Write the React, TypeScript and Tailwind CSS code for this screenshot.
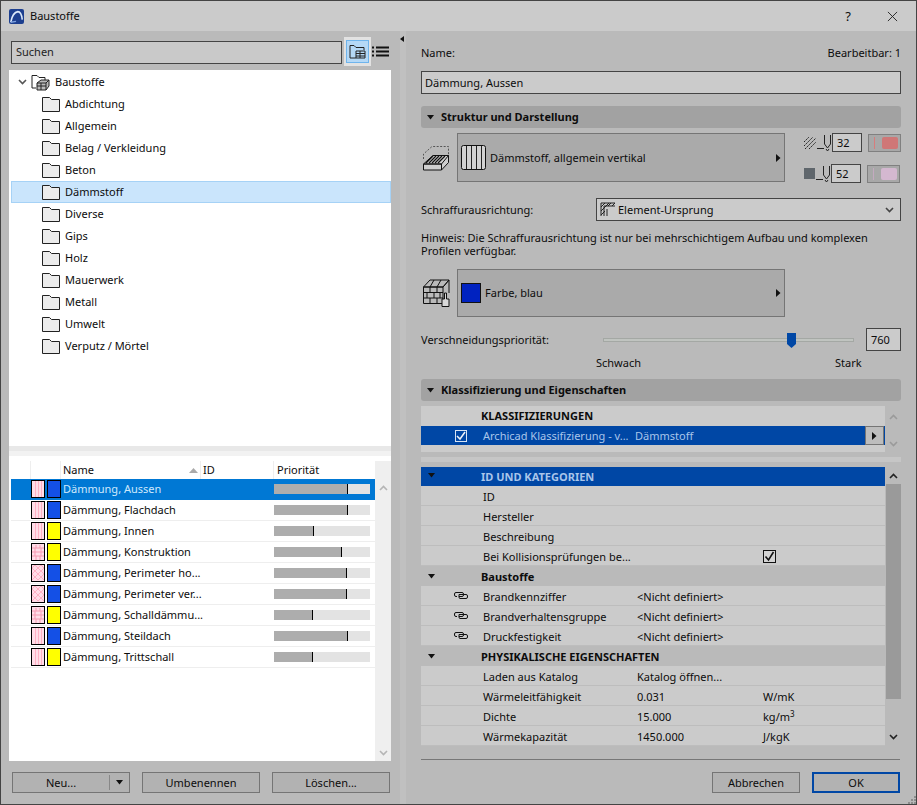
import type { ReactNode } from "react"

const folders = ["Abdichtung", "Allgemein", "Belag / Verkleidung", "Beton", "Dämmstoff", "Diverse", "Gips", "Holz", "Mauerwerk", "Metall", "Umwelt", "Verputz / Mörtel"]

const materials = [
  { name: "Dämmung, Aussen", hatch: "v", color: "#1450e6", pos: 73 },
  { name: "Dämmung, Flachdach", hatch: "v", color: "#1450e6", pos: 73 },
  { name: "Dämmung, Innen", hatch: "v", color: "#ffff00", pos: 39 },
  { name: "Dämmung, Konstruktion", hatch: "b", color: "#ffff00", pos: 67 },
  { name: "Dämmung, Perimeter ho...", hatch: "x", color: "#1450e6", pos: 72 },
  { name: "Dämmung, Perimeter ver...", hatch: "x", color: "#1450e6", pos: 72 },
  { name: "Dämmung, Schalldämmu...", hatch: "b", color: "#ffff00", pos: 38 },
  { name: "Dämmung, Steildach", hatch: "v", color: "#1450e6", pos: 73 },
  { name: "Dämmung, Trittschall", hatch: "v", color: "#ffff00", pos: 38 },
]

function Folder() {
  return (
    <svg width="18" height="15" viewBox="0 0 18 15" className="shrink-0">
      <path d="M.5 14.500V.5h7l2 2h8v12z" fill="#ececec" stroke="#222" strokeLinejoin="round" />
    </svg>
  )
}

function Triangle({ className = "" }: { className?: string }) {
  return (
    <svg width="7" height="5" viewBox="0 0 7 5" className={className}>
      <path d="M0 0h7L3.500 4.500z" fill="#111" />
    </svg>
  )
}

function ArrowRight() {
  return (
    <svg width="5" height="8" viewBox="0 0 5 8">
      <path d="M0 0l4.500 4L0 8z" fill="#111" />
    </svg>
  )
}

function Chevron({ up = false, color = "#222" }: { up?: boolean; color?: string }) {
  return (
    <svg width="9" height="6" viewBox="0 0 9 6">
      <path d={up ? "M1 5l3.500-3.500L8 5" : "M1 1l3.500 3.500L8 1"} fill="none" stroke={color} strokeWidth="1.600" />
    </svg>
  )
}

function HatchSwatch({ kind }: { kind: string }) {
  return (
    <svg width="14" height="18" viewBox="0 0 14 18" className="shrink-0">
      <rect x="0.500" y="0.500" width="13" height="17" fill="#ffdde8" stroke="#000" />
      {kind === "v" && <path d="M4.500 1v16M7.500 1v16M10.500 1v16" stroke="#ffb0c4" />}
      {kind === "b" && <path d="M1 5h12M1 9h12M1 13h12M5 2v3M9 2v3M4 5v4M10 5v4M4 9v4M10 9v4M5 13v4M9 13v4" stroke="#f79ab2" fill="none" />}
      {kind === "x" && <path d="M1 4l3-3 3 3 3-3 3 3M1 4l3 3 3-3 3 3 3-3M1 10l3-3 3 3 3-3 3 3M1 10l3 3 3-3 3 3 3-3M1 16l3-3 3 3 3-3 3 3" stroke="#ffb0c4" fill="none" />}
    </svg>
  )
}

function LinkIcon() {
  return (
    <svg width="14" height="7" viewBox="0 0 14 7" className="mb-[3px]">
      <path
        d="M8 .5H2Q.5.5.5 2v1q0 1.500 1.500 1.500h1M5 2.500h7q1.500 0 1.500 1.500v1q0 1.500-1.500 1.500H6Q5 6.500 5 5V2.500M8 .5q1.500 0 1.500 1.500v1q0 1.500-1.500 1.500H5"
        fill="none"
        stroke="#111"
      />
    </svg>
  )
}

function Button({ children, className = "border border-[#757575]" }: { children: ReactNode; className?: string }) {
  return (
    <div className={`flex h-[21px] w-[118px] items-center justify-center bg-[#b2b2b2] ${className}`}>
      {children}
    </div>
  )
}

function SectionHeader({ label }: { label: string }) {
  return (
    <div className="flex h-[22px] items-center rounded-[3px] bg-[#a2a2a2] pl-[6px] font-bold">
      <Triangle />
      <span className="ml-[7px]">{label}</span>
    </div>
  )
}

function PenRow({ fill, value, color, line }: { fill: ReactNode; value: string; color: string; line: string }) {
  return (
    <div className="flex h-[19px] items-center">
      {fill}
      <svg width="14" height="19" viewBox="0 0 14 19" className="ml-[1px]">
        <path d="M0 15.500h7M7.500 2v9l3 4 3-4V2M9 16l1.500 2 1.500-2" fill="none" stroke="#222" />
      </svg>
      <div className="ml-[1px] flex h-[19px] w-[30px] items-center border border-[#444] bg-[#cbcbcb] pl-[4px]">{value}</div>
      <div className="ml-[6px] flex h-[18px] w-[33px] items-center border border-[#808080] bg-[#a8a8a8] pl-[5px]">
        <div className="h-[12px] w-px" style={{ backgroundColor: color }} />
        <div className="ml-[7px] h-[12px] w-[16px] rounded-[2px]" style={{ backgroundColor: line }} />
      </div>
    </div>
  )
}

function PropRow({ icon, label, value, unit, check }: { icon?: boolean; label: string; value?: string; unit?: ReactNode; check?: boolean }) {
  return (
    <div className="flex h-[20px] items-center border-b border-[#bdbdbd] bg-[#cbcbcb] pt-[2px]">
      <div className="flex w-[62px] justify-end pr-[15px]">{icon && <LinkIcon />}</div>
      <div className="w-[153px]">{label}</div>
      <div className="w-[127px] pl-[1px]">{value}</div>
      <div className="flex-1">
        {unit}
        {check && (
          <div className="flex h-[13px] w-[13px] items-center justify-center border border-[#111] bg-[#d4d4d4]">
            <svg width="11" height="11" viewBox="0 0 11 11">
              <path d="M1.500 5.500l3 3.500 5-8" fill="none" stroke="#111" strokeWidth="1.600" />
            </svg>
          </div>
        )}
      </div>
    </div>
  )
}

function GroupRow({ label }: { label: string }) {
  return (
    <div className="flex h-[20px] items-center bg-[#bababa] pl-[7px] pt-[2px] font-bold">
      <Triangle className="mb-[2px]" />
      <span className="ml-[46px]">{label}</span>
    </div>
  )
}

export default function App() {
  return (
    <div className="relative flex h-[805px] w-[917px] flex-col overflow-hidden border border-[#444] bg-[#bababa] font-['Noto_Sans',sans-serif] text-[11px] leading-[14px] text-[#0c0c0c]">
      <div className="flex h-[30px] shrink-0 items-center bg-[#cbcbcb] pl-[8px] pr-[18px]">
        <svg width="15" height="15" viewBox="0 0 17 17" className="rounded-[2px]">
          <rect width="17" height="17" fill="#1d3f8f" />
          <path d="M2 15Q4 4 10 3q4 0 5 9" fill="none" stroke="#dbe8fa" strokeWidth="1.800" />
          <path d="M2 15l6-1" stroke="#7fa2e0" strokeWidth="1.500" />
        </svg>
        <span className="ml-[6px]">Baustoffe</span>
        <span className="ml-auto text-[13px]">?</span>
        <svg width="11" height="11" viewBox="0 0 12 12" className="ml-[36px]">
          <path d="M1 1l10 10M11 1L1 11" stroke="#222" />
        </svg>
      </div>

      <div className="flex min-h-0 flex-1">
        {/* left column */}
        <div className="flex w-[399px] shrink-0 flex-col">
          <div className="flex h-[39px] items-center pl-[10px] pt-[3px]">
            <div className="flex h-[23px] w-[331px] items-center border border-[#444] bg-[#c9c9c9] pl-[4px] text-[#222]">Suchen</div>
            <div className="mb-[1px] ml-[2px] flex h-[29px] w-[27px] items-center justify-center bg-[#e2e2e2]">
              <div className="flex h-[23px] w-[23px] items-center justify-center border border-[#6fb4ec] bg-[#b4d8f6]">
                <svg width="17" height="15" viewBox="0 0 17 15">
                  <path d="M1 14V1.500h4l2 2h8V6M1 14h6" fill="none" stroke="#222" />
                  <path d="M7 7h9v7H7zM7 9.500h9M7 12h9M11 7v7" fill="none" stroke="#222" />
                </svg>
              </div>
            </div>
            <svg width="17" height="11" viewBox="0 0 17 11" className="mb-[2px] ml-[1px]">
              <path d="M0 1.500h2M4 1.500h13M0 5.500h2M4 5.500h13M0 9.500h2M4 9.500h13" stroke="#111" strokeWidth="2" />
            </svg>
          </div>

          <div className="ml-[8px] h-[376px] w-[382px] bg-white pl-[2px] pt-[1px]">
            <div className="flex h-[22px] items-center pl-[7px]">
              <Chevron color="#555" />
              <svg width="19" height="17" viewBox="0 0 19 17" className="ml-[4px]">
                <path d="M1 14V1.500h5l2 2h6V6M1 14h4" fill="none" stroke="#222" />
                <path d="M6 9l4-3h8v6l-3 4H6zM6 9h9v7M15 9l3-3M6 12h9M10 9v7" fill="#bbb" stroke="#222" />
              </svg>
              <span className="ml-[5px]">Baustoffe</span>
            </div>
            {folders.map((f) => (
              <div
                key={f}
                className={`flex h-[22px] items-center ${f === "Dämmstoff" ? "border border-[#a6d2f6] bg-[#cae5fc] pl-[30px]" : "pl-[31px]"}`}
              >
                <Folder />
                <span className="ml-[5px]">{f}</span>
              </div>
            ))}
          </div>

          <div className="ml-[8px] h-[5px] w-[382px] bg-[#e8e8e8]" />
          <div className="ml-[8px] h-[5px] w-[382px] bg-[#f2f2f2]" />
          <div className="ml-[8px] h-[5px] w-[382px] bg-white" />

          <div className="ml-[8px] flex h-[300px] w-[382px] bg-white pl-[2px]">
            <div className="w-[364px]">
              <div className="flex h-[18px] items-center">
                <div className="h-full w-[20px] border-r border-[#eee]" />
                <div className="h-full w-[30px] border-r border-[#eee]" />
                <div className="flex h-full w-[140px] items-center justify-between border-r border-[#eee] pl-[2px] pr-[2px]">
                  Name
                  <svg width="9" height="5" viewBox="0 0 9 5">
                    <path d="M0 5l4.500-5L9 5z" fill="#aaa" />
                  </svg>
                </div>
                <div className="flex h-full w-[73px] items-center border-r border-[#eee] pl-[2px]">ID</div>
                <div className="flex h-full flex-1 items-center pl-[3px]">Priorität</div>
              </div>
              {materials.map((m, i) => (
                <div
                  key={m.name}
                  className={`flex h-[21px] items-center border-b ${i === 0 ? "border-[#0078d4] bg-[#0078d4] text-[#cfe8fc]" : "border-[#eeeeee]"}`}
                >
                  <div className="w-[20px]" />
                  <HatchSwatch kind={m.hatch} />
                  <div className="ml-[2px] h-[18px] w-[14px] shrink-0 border border-black" style={{ backgroundColor: m.color }} />
                  <div className="ml-[2px] w-[211px] whitespace-nowrap">{m.name}</div>
                  <div className="relative h-[10px] w-[96px] bg-[#e3e3e3]">
                    <div className="h-full border-r border-black bg-[#adadad]" style={{ width: `${m.pos + 1}px` }} />
                  </div>
                </div>
              ))}
            </div>
            <div className="flex w-[16px] flex-col items-center justify-between bg-[#efefef] pb-[5px] pt-[24px]">
              <Chevron up color="#b5b5b5" />
              <Chevron color="#b5b5b5" />
            </div>
          </div>

          <div className="ml-[11px] mt-[11px] flex gap-[12px]">
            <Button>
              <span className="flex-1 text-center">Neu...</span>
              <div className="h-[15px] w-px bg-[#888]" />
              <Triangle className="mx-[6px]" />
            </Button>
            <Button>Umbenennen</Button>
            <Button>Löschen...</Button>
          </div>
        </div>

        {/* splitter */}
        <div className="w-[6px] shrink-0 bg-[#c0c0c0] pt-[5px]">
          <svg width="4" height="6" viewBox="0 0 4 6">
            <path d="M4 0v6L0 3z" fill="#111" />
          </svg>
        </div>

        {/* right column */}
        <div className="ml-[15px] flex w-[480px] shrink-0 flex-col">
          <div className="mt-[14px] flex h-[16px] items-center justify-between">
            <span>Name:</span>
            <span>Bearbeitbar: 1</span>
          </div>
          <div className="mt-[10px] flex h-[23px] items-center border border-[#444] bg-[#cbcbcb] pl-[3px]">Dämmung, Aussen</div>

          <div className="mt-[12px]"><SectionHeader label="Struktur und Darstellung" /></div>

          <div className="mt-[5px] flex h-[49px]">
            <svg width="28" height="27" viewBox="0 0 28 27" className="ml-[2px] mt-[12px]">
              <path d="M.5 14V9L9 1.500h16.500V12" fill="none" stroke="#555" strokeDasharray="2 1.500" />
              <path d="M.5 19L10 10.500h15.500L18.500 19zM.5 19h18v6H.5zM18.500 19v6l7-7.500v-7" fill="#cfcfcf" stroke="#111" />
              <path d="M3 18l7-7M6 18l7-7M9 18l7-7M12 18l7-7M15 18l7-7" stroke="#111" strokeWidth="1.200" />
            </svg>
            <div className="ml-[6px] flex w-[328px] items-center border border-[#757575] bg-[#aaaaaa] pl-[3px] pr-[3px]">
              <svg width="25" height="25" viewBox="0 0 25 25">
                <rect x="0.500" y="0.500" width="24" height="24" rx="2" fill="#d2d2d2" stroke="#111" />
                <path d="M5.500 1v23M10.500 1v23M15.500 1v23M20.500 1v23" stroke="#222" />
              </svg>
              <span className="ml-[4px] flex-1">Dämmstoff, allgemein vertikal</span>
              <ArrowRight />
            </div>
            <div className="ml-[19px] flex flex-col gap-[12px]">
              <PenRow
                value="32"
                color="#d87c7c"
                line="#cf7777"
                fill={
                  <svg width="12" height="12" viewBox="0 0 12 12">
                    <path d="M0 5l5-5M0 9l9-9M1 12L12 1M5 12l7-7" stroke="#222" strokeDasharray="2 1" />
                  </svg>
                }
              />
              <PenRow
                value="52"
                color="#c4aac0"
                line="#d4b8d0"
                fill={<div className="h-[11px] w-[11px] bg-[#5f666c]" />}
              />
            </div>
          </div>

          <div className="mt-[16px] flex h-[23px] items-center">
            <span className="w-[175px]">Schraffurausrichtung:</span>
            <div className="flex h-[23px] flex-1 items-center border border-[#444] bg-[#cbcbcb] pl-[3px] pr-[6px]">
              <svg width="16" height="15" viewBox="0 0 16 15">
                <path d="M1 1h14M1 1v13M4 14V4h11M7 14V7M1 5l4-4M1 9l8-8M1 13L5 9M8 4l3-3M12 4l3-3" stroke="#222" fill="none" />
              </svg>
              <span className="ml-[2px] flex-1">Element-Ursprung</span>
              <Chevron color="#444" />
            </div>
          </div>

          <p className="mt-[10px] w-[470px] leading-[13px]">
            Hinweis: Die Schraffurausrichtung ist nur bei mehrschichtigem Aufbau und komplexen Profilen verfügbar.
          </p>

          <div className="mt-[12px] flex h-[48px] items-center">
            <svg width="28" height="28" viewBox="0 0 28 28" className="ml-[2px]">
              <path d="M.5 8L7 1h19L20 8zM.5 8H20v16.500H.5zM20 8l6-7v13M.5 13.500H20M.5 19H20M7 8v5.500M14 8v5.500M4 13.500V19M11 13.500V19M17 13.500V19M7 19v5.500M14 19v5.500M11 1L7 8M18 1l-4 7" fill="none" stroke="#111" />
              <path d="M21.500 14h2v6h2.500v7.500h-7V20h2.500z" fill="#d8d8d8" stroke="#111" />
            </svg>
            <div className="ml-[6px] flex h-[48px] w-[328px] items-center border border-[#757575] bg-[#aaaaaa] pl-[3px] pr-[3px]">
              <div className="h-[20px] w-[20px] border border-[#111] bg-[#0022c0]" />
              <span className="ml-[4px] flex-1">Farbe, blau</span>
              <ArrowRight />
            </div>
          </div>

          <div className="mt-[11px] flex h-[23px] items-center">
            <span className="w-[182px]">Verschneidungspriorität:</span>
            <div className="relative h-[4px] w-[251px] border border-[#a4a8a4] bg-[#c0c4c0]">
              <svg width="9" height="15" viewBox="0 0 9 15" className="absolute left-[183px] top-[-6px]">
                <path d="M0 0h9v11l-4.500 4L0 11z" fill="#0047a5" />
              </svg>
            </div>
            <div className="ml-auto flex h-[23px] w-[35px] items-center border border-[#444] bg-[#cbcbcb] pl-[4px]">760</div>
          </div>

          <div className="mt-[4px] flex h-[16px] items-center pl-[175px]">
            <span className="w-[239px]">Schwach</span>
            <span>Stark</span>
          </div>

          <div className="mt-[8px]"><SectionHeader label="Klassifizierung und Eigenschaften" /></div>

          <div className="mt-[5px] flex h-[46px]">
            <div className="w-[464px] bg-[#cbcbcb]">
              <div className="flex h-[20px] items-center pl-[60px] font-bold">KLASSIFIZIERUNGEN</div>
              <div className="flex h-[19px] items-center bg-[#0047a5] pl-[34px] pr-[1px] text-[#a9c5ea]">
                <div className="flex h-[12px] w-[12px] items-center justify-center border border-[#d8e4f4]">
                  <svg width="10" height="10" viewBox="0 0 10 10">
                    <path d="M1 5l3 3 5-7" fill="none" stroke="#f0f4fa" strokeWidth="1.500" />
                  </svg>
                </div>
                <span className="ml-[16px] w-[152px] whitespace-nowrap">Archicad Klassifizierung - v...</span>
                <span>Dämmstoff</span>
                <div className="ml-auto flex h-[19px] w-[19px] items-center justify-center border border-[#757575] bg-[#bdbdbd]">
                  <ArrowRight />
                </div>
              </div>
            </div>
            <div className="flex flex-1 flex-col items-center justify-between pb-[5px] pt-[8px]">
              <Chevron up color="#9a9a9a" />
              <Chevron color="#9a9a9a" />
            </div>
          </div>

          <div className="mt-[5px] h-[5px] bg-[#c6c6c6]" />

          <div className="mt-[5px] flex h-[279px]">
            <div className="w-[464px] overflow-hidden">
              <div className="flex h-[19px] items-center bg-[#0047a5] pl-[7px] font-bold text-[#a9c5ea]">
                <Triangle className="mb-[2px]" />
                <span className="ml-[46px]">ID UND KATEGORIEN</span>
              </div>
              <PropRow label="ID" />
              <PropRow label="Hersteller" />
              <PropRow label="Beschreibung" />
              <PropRow label="Bei Kollisionsprüfungen be..." check />
              <GroupRow label="Baustoffe" />
              <PropRow icon label="Brandkennziffer" value="<Nicht definiert>" />
              <PropRow icon label="Brandverhaltensgruppe" value="<Nicht definiert>" />
              <PropRow icon label="Druckfestigkeit" value="<Nicht definiert>" />
              <GroupRow label="PHYSIKALISCHE EIGENSCHAFTEN" />
              <PropRow label="Laden aus Katalog" value="Katalog öffnen..." />
              <PropRow label="Wärmeleitfähigkeit" value="0.031" unit="W/mK" />
              <PropRow label="Dichte" value="15.000" unit={<span>kg/m<sup className="text-[8px]">3</sup></span>} />
              <PropRow label="Wärmekapazität" value="1450.000" unit="J/kgK" />
            </div>
            <div className="flex flex-1 flex-col items-center">
              <div className="flex h-[17px] items-center"><Chevron up /></div>
              <div className="h-[215px] w-[15px] bg-[#9a9a9a]" />
              <div className="mt-auto flex h-[14px] items-center pb-[4px]"><Chevron /></div>
            </div>
          </div>

          <div className="mr-[1px] mt-[13px] h-px bg-[#777]" />

          <div className="mr-[1px] mt-[12px] flex justify-end gap-[12px]">
            <Button className="!w-[88px] border border-[#757575]">Abbrechen</Button>
            <Button className="!w-[88px] border-2 border-[#0047a5]">OK</Button>
          </div>
        </div>
      </div>

      {/* resize grip */}
      <svg width="9" height="9" viewBox="0 0 9 9" className="absolute bottom-0 right-0">
        <path d="M7 1h2v2H7zM4 4h2v2H4zM7 4h2v2H7zM1 7h2v2H1zM4 7h2v2H4zM7 7h2v2H7z" fill="#8c8c8c" />
      </svg>
    </div>
  )
}
